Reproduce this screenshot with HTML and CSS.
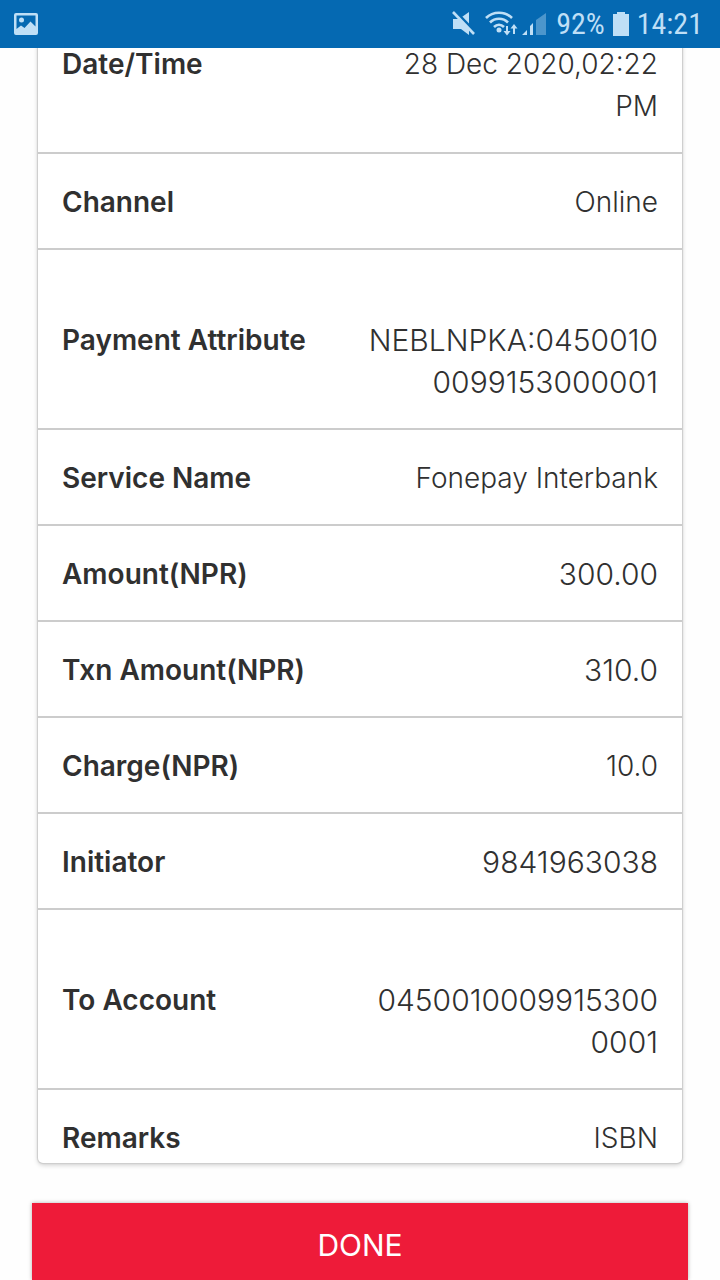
FILE: index.html
```html
<!DOCTYPE html>
<html lang="en">
<head>
<meta charset="utf-8">
<meta name="viewport" content="width=device-width, initial-scale=1">
<title>Transaction Details</title>
<link rel="stylesheet" href="styles.css">
</head>
<body>
<header class="status-bar">
  <svg class="picture-icon" width="24" height="24" viewBox="0 0 24 24" aria-hidden="true">
    <path fill="#bfdff6" fill-rule="evenodd" d="M2 1h20a2 2 0 0 1 2 2v18a2 2 0 0 1-2 2H2a2 2 0 0 1-2-2V3a2 2 0 0 1 2-2zM2.500 3.500v13.500l4.500-3.500 3.500 2.500 6-6.500 5 5V3.500z"/>
    <circle cx="7.500" cy="8" r="2.500" fill="#bfdff6"/>
  </svg>
  <div class="status-right">
    <svg width="96" height="26" viewBox="0 0 96 26" aria-hidden="true">
      <g fill="#bfdff6">
        <path d="M1 8h6l10-7v23l-8-6H1z"/>
        <path d="M3 0l21 22" stroke="#0569b2" stroke-width="3"/>
        <path d="M1 1l21 22" stroke="#bfdff6" stroke-width="2.600"/>
        <g fill="none" stroke="#bfdff6" stroke-width="2.600">
          <path d="M34 7c7-7 19-7 26 0"/>
          <path d="M38 11.500c5-5 13-5 18 0"/>
          <path d="M42 16c3-3 7-3 10 0"/>
          <path d="M55 15v7M62 23v-7" stroke-width="2"/>
        </g>
        <circle cx="47" cy="19" r="2.500"/>
        <path d="M51.500 20h7l-3.500 4.500zM58.500 17.500h7l-3.500-4.500z"/>
        <path d="M70 24l5-5v5zM78 15l3-3v12h-3z"/>
        <path d="M84 9l10-7v22H84z" opacity=".38"/>
      </g>
    </svg>
    <span class="battery-level">92%</span>
    <svg width="16" height="24" viewBox="0 0 16 24" aria-hidden="true">
      <path fill="#bfdff6" d="M4 0h8v2h4v22H0V2h4z"/>
    </svg>
    <time class="clock">14:21</time>
  </div>
</header>
<main class="screen">
  <dl class="details">
    <div class="row row-first"><dt>Date/Time</dt><dd>28 Dec 2020,02:22 PM</dd></div>
    <div class="row"><dt>Channel</dt><dd>Online</dd></div>
    <div class="row row-tall"><dt>Payment Attribute</dt><dd class="number">NEBLNPKA:0450010<wbr>0099153000001</dd></div>
    <div class="row"><dt>Service Name</dt><dd>Fonepay Interbank</dd></div>
    <div class="row"><dt>Amount(NPR)</dt><dd class="number">300.00</dd></div>
    <div class="row"><dt>Txn Amount(NPR)</dt><dd class="number">310.0</dd></div>
    <div class="row"><dt>Charge(NPR)</dt><dd>10.0</dd></div>
    <div class="row"><dt>Initiator</dt><dd class="number">9841963038</dd></div>
    <div class="row row-tall"><dt>To Account</dt><dd class="number">0450010009915300<wbr>0001</dd></div>
    <div class="row row-last"><dt>Remarks</dt><dd>ISBN</dd></div>
  </dl>
  <button class="done" type="button">DONE</button>
</main>
</body>
</html>
```

FILE: styles.css
```css
* {
  box-sizing: border-box;
}

body {
  margin: 0;
  min-height: 100vh;
  display: flex;
  flex-direction: column;
  background: #fefefe;
  color: #303030;
  font-family: Inter, "Liberation Sans", sans-serif;
}

.status-bar {
  position: relative;
  z-index: 1;
  display: flex;
  align-items: center;
  justify-content: space-between;
  height: 48px;
  padding: 0 17px 0 14px;
  background: #0569b2;
  color: #bfdff6;
  font-family: "Roboto Condensed", "Liberation Sans Narrow", Roboto, sans-serif;
  font-size: 30px;
  line-height: 48px;
}

.status-right {
  display: flex;
  align-items: center;
  gap: 8px;
}

.screen {
  flex: 1;
  display: flex;
  flex-direction: column;
  padding: 0 32px;
}

.details {
  margin: -6px 6px 40px;
  background: #fff;
  border-radius: 0 0 5px 5px;
  box-shadow: 0 0 1px 1px #ccc, 0 2px 5px rgba(0, 0, 0, .2);
}

.row {
  display: grid;
  grid-template-columns: 1fr 1fr;
  padding: 27px 24px 25px;
  border-bottom: 2px solid #ccc;
  font-size: 28px;
  line-height: 42px;
}

.row-first {
  padding-top: 1px;
}

.row-tall {
  padding-top: 69px;
}

.row-last {
  padding-bottom: 4px;
  border-bottom: 0;
}

.row dt {
  font-weight: 600;
}

.row dd {
  margin: 0;
  font-weight: 300;
  text-align: right;
}

.row .number {
  font-size: 30px;
}

.done {
  flex: 1;
  padding: 20px 0 14px;
  border: 0;
  background: #ee1b39;
  box-shadow: 0 0 4px rgba(0, 0, 0, .3);
  color: #fff;
  font-family: inherit;
  font-size: 30px;
  line-height: 42px;
}
```
